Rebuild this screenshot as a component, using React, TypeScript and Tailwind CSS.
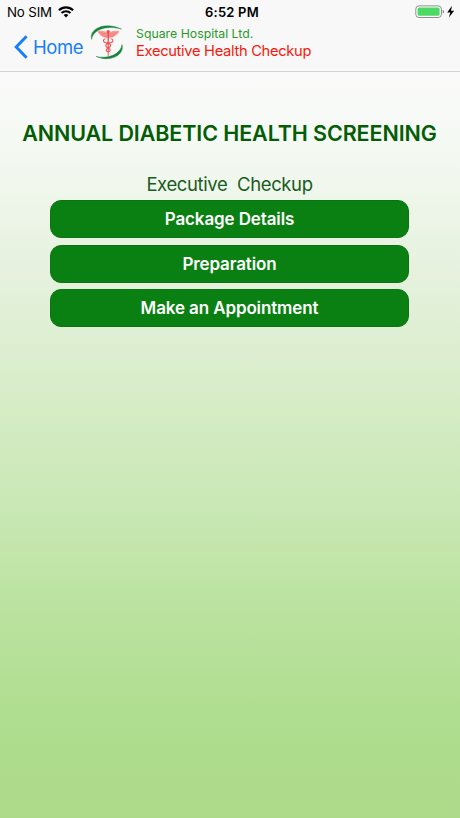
import React from 'react'

const actions = ['Package Details', 'Preparation', 'Make an Appointment']

const WifiIcon = () => (
    <svg className="ml-[6px] h-[12px] w-[16px]" viewBox="0 0 16 12" fill="none" stroke="#000">
        <path d="M0.9 4.3C4.9 0.4 11.1 0.4 15.1 4.3" strokeWidth="2.1" />
        <path d="M3.5 7C6 4.6 10 4.6 12.5 7" strokeWidth="2" />
        <path d="M8 11.4L5.6 9Q8 6.9 10.4 9Z" fill="#000" stroke="none" />
    </svg>
)

const BatteryIcon = () => (
    <svg className="h-[14px] w-[40px]" viewBox="0 0 40 14">
        <rect x="0.8" y="0.9" width="25.6" height="11.6" rx="3.2" fill="#fff" stroke="#8e8e8e" strokeWidth="1" />
        <rect x="2.6" y="2.6" width="22" height="8.2" rx="1.6" fill="#4cd964" />
        <path d="M27.6 4.8Q29.1 5.2 29.1 6.7T27.6 8.6Z" fill="#8e8e8e" />
        <path d="M37 0.8L32.2 7.5H35.3L33.9 12.6L39.2 5.7H36Z" fill="#000" />
    </svg>
)

const Logo = () => (
    <svg className="ml-[7px] h-[36px] w-[34px]" viewBox="0 0 34 36" fill="none">
        {/* Swooshes */}
        <path d="M1.6 15.4C-1.4 5 15 -3.2 31.6 5.2C18 1 3 5 1.6 15.4Z" fill="#15843c" stroke="#15843c" strokeWidth="0.4" />
        <path d="M32 20.6C35 31 20 38.8 6 32.4C18 35.4 31 30 32 20.6Z" fill="#15843c" stroke="#15843c" strokeWidth="0.4" />
        {/* Wings */}
        <path d="M7.4 6.9C11.4 6.7 15.6 6.9 18.2 9C20.8 6.9 25 6.7 29.4 6.9C28.4 10.4 24.6 13.4 18.2 13.8C12 13.4 8.6 10.4 7.4 6.9Z" fill="#f89f9c" />
        <path d="M9 8.2L17 9.8M10.4 10L17 11.4M12 11.8L17 12.8M27.6 8.2L19.4 9.8M26 10L19.4 11.4M24.4 11.8L19.4 12.8" stroke="#f0605e" strokeWidth="0.5" />
        {/* Staff and snakes */}
        <circle cx="18.2" cy="7.6" r="1.6" fill="#f04a4a" />
        <path d="M17.4 8H19L18.6 32H17.8Z" fill="#f04a4a" />
        <path d="M15.8 14.8C12.8 15 12.6 18 15.6 18.6C20.6 19.2 22.4 21.8 18.4 24C15.4 25.4 15.6 27.2 18.2 28" stroke="#f04a4a" strokeWidth="1.1" />
        <path d="M20.6 14.8C23.6 15 23.8 18 20.8 18.6C15.8 19.2 14 21.8 18 24C21 25.4 20.8 27.2 18.2 28" stroke="#f04a4a" strokeWidth="1.1" />
    </svg>
)

const StatusBar = () => (
    <div className="flex h-[24px] items-center justify-between pr-[5px] pl-[7px] text-black">
        <div className="flex flex-1 items-center">
            <span className="pt-px text-[13.3px] tracking-[-0.15px]">No SIM</span>
            <WifiIcon />
        </div>
        <span className="pt-px pl-[2px] text-[13px] font-semibold tracking-[0.2px]">6:52 PM</span>
        <div className="flex flex-1 justify-end">
            <BatteryIcon />
        </div>
    </div>
)

const Header = () => (
    <header className="h-[72px] border-b border-[#d2d6d0] bg-[#f8f8f8]">
        <StatusBar />
        <div className="flex">
            <a href="#home" className="flex h-[46px] items-center pl-[14px] text-[#147efb]">
                <svg className="h-[24px] w-[14px]" viewBox="0 0 14 24" fill="none" stroke="currentColor" strokeWidth="2.9">
                    <path d="M12.6 1.2L2.2 12L12.6 22.8" />
                </svg>
                <span className="ml-[5px] w-[50px] pt-[2px] text-[18.5px] tracking-[-0.4px]">Home</span>
            </a>
            <Logo />
            <div className="ml-[12px] pt-[2px]">
                <p className="text-[12.3px] leading-[16px] text-[#2b9a2b]">Square Hospital Ltd.</p>
                <p className="text-[14.7px] leading-[18px] tracking-[-0.31px] text-[#f5190f]">Executive Health Checkup</p>
            </div>
        </div>
    </header>
)

const App = () => {
    return (
        <div className="flex h-[818px] w-[460px] flex-col overflow-hidden bg-[linear-gradient(180deg,#fafafa_72px,#f4f9f2_150px,#edf5e8_210px,#e2f0d9_300px,#d9edca_380px,#cae8b6_500px,#bce3a1_600px,#b0de90_710px,#acda89_818px)] font-['Inter','Liberation_Sans',sans-serif] whitespace-nowrap">
            <Header />
            <main className="flex flex-col items-center pt-[46px] pr-px">
                <h1 className="text-[21.5px] leading-[30px] font-semibold tracking-[-0.1px] text-[#045c06]">ANNUAL DIABETIC HEALTH SCREENING</h1>
                <h2 className="mt-[23px] text-[18.5px] leading-[26px] tracking-[-0.38px] whitespace-pre text-[#1a5c1e]">Executive  Checkup</h2>
                <div className="mt-[3px] flex w-[359px] flex-col gap-[6.5px]">
                    {actions.map((label) => (
                        <button key={label} className="h-[38px] rounded-[11px] border border-[#0a7410] bg-[#098011] pt-[2px] text-[17px] font-semibold tracking-[-0.12px] text-white">
                            {label}
                        </button>
                    ))}
                </div>
            </main>
        </div>
    )
}
export default App
